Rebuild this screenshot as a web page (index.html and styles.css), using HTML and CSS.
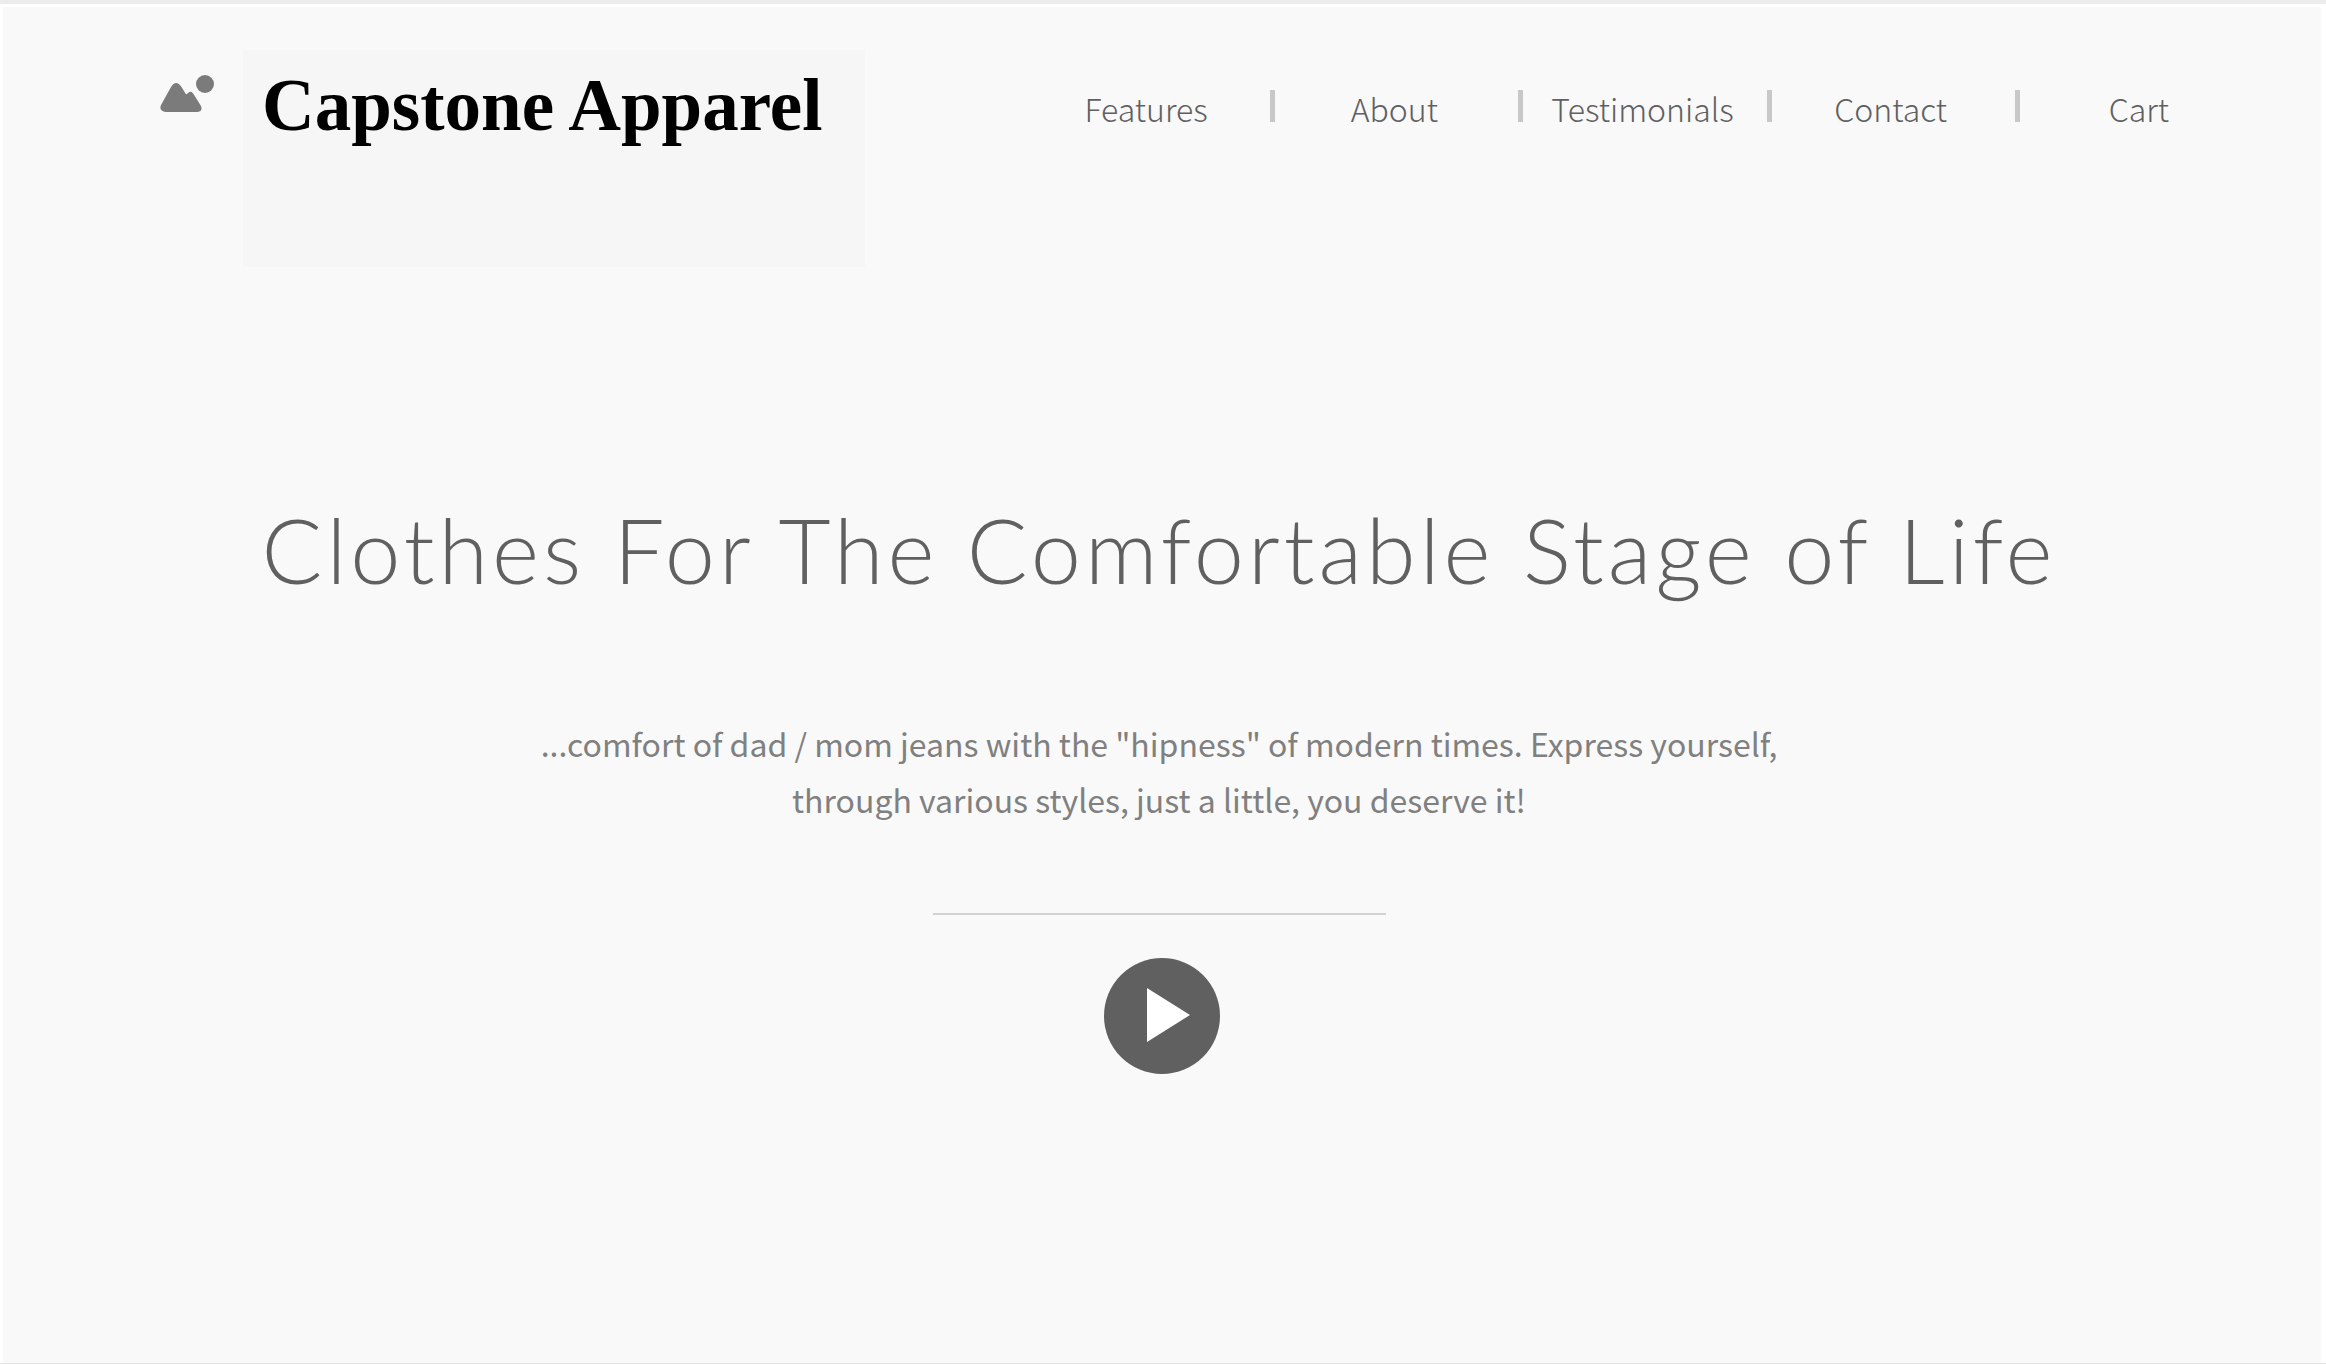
FILE: index.html
```html
<!DOCTYPE html>
<html lang="en">
<head>
<meta charset="utf-8">
<meta name="viewport" content="width=device-width, initial-scale=1">
<title>Capstone Apparel</title>
<link rel="stylesheet" href="styles.css">
</head>
<body>
<div class="frame">
  <div class="page">
    <header class="header">
      <svg class="mark" viewBox="0 0 54 38" aria-hidden="true">
        <circle cx="45" cy="9" r="9"/>
        <path d="M1 30 11 12Q16 4 21.500 12L25.500 18.500Q26.500 20 28 18Q31 15 33.500 19L41 31Q43 36.500 37.500 37H6Q-1.500 36 1 30Z"/>
      </svg>
      <a class="logo" href="#">Capstone Apparel</a>
      <nav class="nav" aria-label="Main">
        <ul class="nav-list">
          <li class="nav-item"><a href="#features">Features</a></li>
          <li class="nav-item"><a href="#about">About</a></li>
          <li class="nav-item"><a href="#testimonials">Testimonials</a></li>
          <li class="nav-item"><a href="#contact">Contact</a></li>
          <li class="nav-item"><a href="#cart">Cart</a></li>
        </ul>
      </nav>
    </header>
    <main class="hero">
      <div class="intro">
        <h1 class="title">Clothes For The Comfortable Stage of Life</h1>
        <p class="lead">...comfort of dad / mom jeans with the "hipness" of modern times. Express yourself, through various styles, just a little, you deserve it!</p>
        <hr class="rule">
      </div>
      <button class="play" type="button" aria-label="Play video">
        <svg viewBox="0 0 116 116" aria-hidden="true"><path d="M43 30 86 57 43 84Z"/></svg>
      </button>
    </main>
  </div>
</div>
</body>
</html>
```
FILE: styles.css
```css
* {
  box-sizing: border-box;
}

body {
  margin: 0;
  background: #fff;
  color: #606060;
  font-family: "Noto Sans CJK SC", "Noto Sans", sans-serif;
}

a {
  color: inherit;
  text-decoration: none;
}

.frame {
  display: flex;
  flex-direction: column;
  min-height: 100vh;
  padding: 3px 5px 0 3px;
  border-top: 4px solid #ececec;
  border-bottom: 1px solid #e4e4e4;
}

.page {
  flex: 1;
  background: #f9f9f9;
}

.header {
  display: flex;
  align-items: flex-start;
  padding: 43px 58px 0 157px;
}

.mark {
  flex: none;
  width: 54px;
  margin: 25px 29px 0 0;
  fill: #7b7b7b;
}

.logo {
  flex: 0 1 622px;
  min-height: 217px;
  padding: 16px 19px;
  background: #f6f6f6;
  color: #000;
  font: bold 73px/80px "Liberation Serif", serif;
  white-space: nowrap;
}

.nav {
  flex: 1;
  margin-left: 157px;
  padding-top: 34px;
}

.nav-list {
  display: grid;
  grid-template-columns: repeat(5, 1fr);
  margin: 0;
  padding: 0;
  list-style: none;
}

.nav-item {
  position: relative;
  font-size: 32px;
  font-weight: 300;
  line-height: 48px;
  text-align: center;
}

.nav-item:not(:last-child)::after {
  content: "";
  position: absolute;
  top: 6px;
  right: -5px;
  width: 5px;
  height: 32px;
  background: #c8c8c8;
}

.hero {
  display: flex;
  flex-direction: column;
  align-items: center;
  padding: 228px 40px 80px;
  text-align: center;
}

.intro {
  padding-right: 6px;
}

.title {
  margin: 0;
  font: 300 90px/108px Lato, sans-serif;
  letter-spacing: 4px;
}

.lead {
  max-width: 1300px;
  margin: 112px auto 0;
  color: #808080;
  font-size: 32px;
  line-height: 56px;
}

.rule {
  width: 453px;
  height: 2px;
  margin: 86px auto 43px;
  border: 0;
  background: #d2d2d2;
}

.play {
  width: 116px;
  height: 116px;
  padding: 0;
  border: 0;
  border-radius: 50%;
  background: #606060;
}

.play svg {
  display: block;
  fill: #fff;
}
```
